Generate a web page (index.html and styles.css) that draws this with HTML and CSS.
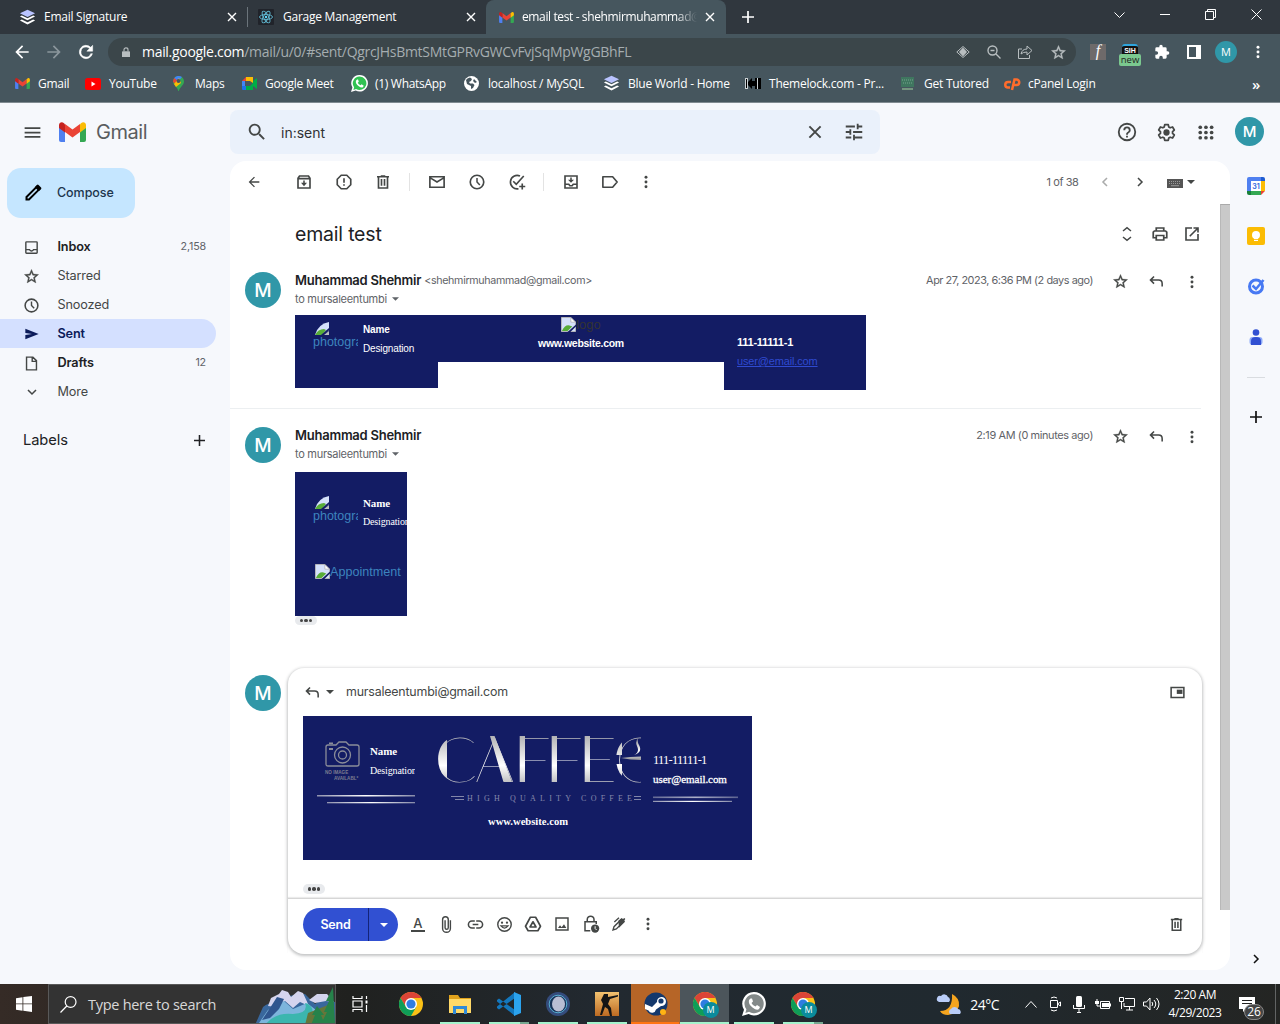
FILE: index.html
```html
<!DOCTYPE html>
<html lang="en">
<head>
<meta charset="utf-8">
<title>email test - Gmail</title>
<link rel="stylesheet" href="styles.css">
</head>
<body>
<svg class="defs" width="0" height="0" aria-hidden="true">
  <defs>
    <linearGradient id="silver" x1="0" y1="0" x2="0" y2="1"><stop offset="0" stop-color="#8c8c90"/><stop offset=".6" stop-color="#fff"/><stop offset="1" stop-color="#929296"/></linearGradient>
    <linearGradient id="rule" x1="0" x2="1"><stop offset="0" stop-color="#8f92ae"/><stop offset=".5" stop-color="#fff"/><stop offset="1" stop-color="#8488a8"/></linearGradient>
    <linearGradient id="gold" x1="0" y1="0" x2="0" y2="1"><stop offset="0" stop-color="#f2c270"/><stop offset="1" stop-color="#bd6a22"/></linearGradient>
    <symbol id="layers" viewBox="0 0 18 18"><path fill="#b9c3ff" d="M9 .8 17 4.6 9 8.4 1 4.6z"/><path fill="#fff" d="m1 8 2-1 6 2.8L15 7l2 1-8 4zM1 12.2l2-1 6 2.8 6-2.8 2 1-8 4.3z"/></symbol>
    <symbol id="gm" viewBox="0 0 27 20"><path fill="#4f80f0" d="M0 5v13a2 2 0 0 0 2 2h4V9z"/><path fill="#34a853" d="M21 9v11h4a2 2 0 0 0 2-2V5z"/><path fill="#ea4335" d="M6 2v8l7.500 5.500L21 10V2l-7.500 5.600z"/><path fill="#c5221f" d="M0 3v3l6 4.400V2.200L5 1.200C3-.8 0 .4 0 3z"/><path fill="#fbbc04" d="M27 3v3l-6 4.400V2.200l1-1C24-.8 27 .4 27 3z"/></symbol>
    <symbol id="x" viewBox="0 0 10 10"><path fill="none" stroke="currentColor" stroke-width="1.400" d="m1 1 8 8M9 1 1 9"/></symbol>
    <symbol id="plus" viewBox="0 0 12 12"><path fill="none" stroke="currentColor" stroke-width="1.700" d="M6 0v12M0 6h12"/></symbol>
    <symbol id="back" viewBox="0 0 24 24"><path fill="currentColor" d="M20 11H7.800l5.600-5.600L12 4l-8 8 8 8 1.400-1.400L7.800 13H20z"/></symbol>
    <symbol id="reload" viewBox="0 0 24 24"><path fill="currentColor" d="M17.650 6.350A8 8 0 1 0 19.730 14h-2.080A6 6 0 1 1 12 6c1.660 0 3.140.69 4.220 1.780L13 11h7V4z" stroke="currentColor" stroke-width=".6"/></symbol>
    <symbol id="lock" viewBox="0 0 10 13"><path fill="currentColor" d="M1 5h8a1 1 0 0 1 1 1v6H0V6a1 1 0 0 1 1-1z"/><path fill="none" stroke="currentColor" stroke-width="1.400" d="M2.500 5V3a2.500 2.300 0 0 1 5 0v2"/></symbol>
    <symbol id="star" viewBox="0 0 24 24"><path fill="currentColor" stroke="currentColor" stroke-width=".5" d="m22 9.240-7.190-.62L12 2 9.190 8.630 2 9.240l5.460 4.730L5.820 21 12 17.270 18.180 21l-1.630-7.030zM12 15.400l-3.760 2.270 1-4.280-3.320-2.880 4.380-.38L12 6.100l1.710 4.040 4.380.38-3.320 2.880 1 4.280z"/></symbol>
    <symbol id="dots" viewBox="0 0 24 24"><g fill="currentColor"><circle cx="12" cy="5" r="2.200"/><circle cx="12" cy="12" r="2.200"/><circle cx="12" cy="19" r="2.200"/></g></symbol>
    <symbol id="search" viewBox="0 0 24 24"><path fill="currentColor" d="M15.500 14h-.79l-.28-.27A6.500 6.500 0 1 0 13.730 14.430l.27.28v.79l5 4.990L20.490 19zm-6 0a4.500 4.500 0 1 1 0-9 4.500 4.500 0 0 1 0 9z"/></symbol>
    <symbol id="menu" viewBox="0 0 24 24"><path fill="currentColor" d="M3 18h18v-2H3zm0-5h18v-2H3zm0-7v2h18V6z"/></symbol>
    <symbol id="tune" viewBox="0 0 24 24"><path fill="currentColor" d="M3 17v2h6v-2zM3 5v2h10V5zm10 16v-2h8v-2h-8v-2h-2v6zM7 9v2H3v2h4v2h2V9zm14 4v-2H11v2zm-6-4h2V7h4V5h-4V3h-2z"/></symbol>
    <symbol id="help" viewBox="0 0 24 24"><path fill="currentColor" d="M11 18h2v-2h-2zm1-16a10 10 0 1 0 0 20 10 10 0 0 0 0-20zm0 18a8 8 0 1 1 0-16 8 8 0 0 1 0 16zm0-14a4 4 0 0 0-4 4h2a2 2 0 1 1 4 0c0 2-3 1.750-3 5h2c0-2.250 3-2.500 3-5a4 4 0 0 0-4-4z"/></symbol>
    <symbol id="gear" viewBox="0 0 24 24"><path fill="none" stroke="currentColor" stroke-width="2" stroke-linejoin="round" d="M10 3h4l.6 2.700 1.600.9 2.700-.9 2 3.500-2 1.800v2l2 1.800-2 3.500-2.700-.9-1.600.9L14 21h-4l-.6-2.700-1.600-.9-2.700.9-2-3.500 2-1.800v-2l-2-1.800 2-3.500 2.700.9 1.600-.9z"/><circle cx="12" cy="12" r="3.600" fill="currentColor"/></symbol>
    <symbol id="apps" viewBox="0 0 24 24"><g fill="currentColor"><circle cx="6" cy="6" r="2.100"/><circle cx="12.500" cy="6" r="2.100"/><circle cx="19" cy="6" r="2.100"/><circle cx="6" cy="12" r="2.100"/><circle cx="12.500" cy="12" r="2.100"/><circle cx="19" cy="12" r="2.100"/><circle cx="6" cy="18" r="2.100"/><circle cx="12.500" cy="18" r="2.100"/><circle cx="19" cy="18" r="2.100"/></g></symbol>
    <symbol id="pencil" viewBox="0 0 24 24"><path fill="none" stroke="currentColor" stroke-width="2.400" d="M4.200 16.800 17 4l3 3L7.200 19.800h-3z"/><path fill="currentColor" d="m14 5 2.700-2.700a1.500 1.500 0 0 1 2 0l3 3a1.500 1.500 0 0 1 0 2L19 10z"/></symbol>
    <symbol id="inbox" viewBox="0 0 24 24"><path fill="currentColor" d="M19 3H5a2 2 0 0 0-2 2v14a2 2 0 0 0 2 2h14a2 2 0 0 0 2-2V5a2 2 0 0 0-2-2zm0 16H5v-3h3.560a4 4 0 0 0 6.880 0H19zm0-5h-4.990a2 2 0 0 1-4 0H5V5h14z"/></symbol>
    <symbol id="clock" viewBox="0 0 24 24"><circle cx="12" cy="12" r="9" fill="none" stroke="currentColor" stroke-width="2.200"/><path fill="none" stroke="currentColor" stroke-width="2" d="M12 6.500V12l3.800 4"/></symbol>
    <symbol id="send" viewBox="0 0 24 24"><path fill="currentColor" d="M2 4v6.500l10 1.500-10 1.500V20l20-8z"/></symbol>
    <symbol id="draft" viewBox="0 0 24 24"><path fill="none" stroke="currentColor" stroke-width="2" d="M14 3H5v18h14V8zm-1 0v6h6"/></symbol>
    <symbol id="down" viewBox="0 0 24 24"><path fill="none" stroke="currentColor" stroke-width="2.300" d="m6 9 6 6 6-6"/></symbol>
    <symbol id="archive" viewBox="0 0 24 24"><path fill="none" stroke="currentColor" stroke-width="2.200" d="M4 7l2-3h12l2 3v13H4zM4 7.500h16"/><path fill="currentColor" d="M11 10h2v3h3l-4 4.500L8 13h3z"/></symbol>
    <symbol id="spam" viewBox="0 0 24 24"><path fill="none" stroke="currentColor" stroke-width="2.200" d="M8.300 3h7.400L21 8.300v7.400L15.700 21H8.300L3 15.700V8.300zM12 7v6m0 2v2"/></symbol>
    <symbol id="trash" viewBox="0 0 24 24"><path fill="none" stroke="currentColor" stroke-width="2.200" d="M4 5h16M9 4h6M6 5v15h12V5M10 8v9m4-9v9"/></symbol>
    <symbol id="mail" viewBox="0 0 24 24"><path fill="none" stroke="currentColor" stroke-width="2.200" d="M2.500 5h19v14h-19zM3 6.500l9 5.500 9-5.500"/></symbol>
    <symbol id="task" viewBox="0 0 24 24"><path fill="none" stroke="currentColor" stroke-width="2.200" d="M16 4a9 9 0 1 0-2 17M7 11l4 4L21 4m-2 10v8m-4-4h8"/></symbol>
    <symbol id="move" viewBox="0 0 24 24"><path fill="none" stroke="currentColor" stroke-width="2.200" d="M4 4h16v16H4zM4 15h5l1.500 2h3L15 15h5"/><path fill="currentColor" d="M11 6h2v3h3l-4 4-4-4h3z"/></symbol>
    <symbol id="label" viewBox="0 0 24 24"><path fill="none" stroke="currentColor" stroke-width="2.200" stroke-linejoin="round" d="M2.500 5h13l6 7-6 7h-13z"/></symbol>
    <symbol id="kbd" viewBox="0 0 16 9"><path fill="#555" d="M0 0h16v9H0z"/><path stroke="#999" stroke-dasharray="1 1" d="M2 2.500h12M2 4.500h12"/><path stroke="#999" d="M4 6.700h8"/></symbol>
    <symbol id="caret" viewBox="0 0 8 4"><path fill="currentColor" d="M0 0h8L4 4z"/></symbol>
    <symbol id="unfold" viewBox="0 0 24 24"><path fill="none" stroke="currentColor" stroke-width="2.200" d="m6 7.500 6-5 6 5m-12 9 6 5 6-5"/></symbol>
    <symbol id="print" viewBox="0 0 24 24"><path fill="none" stroke="currentColor" stroke-width="2.300" d="M7 8V4h10v4M7 17H3V9.500L4.500 8h15L21 9.500V17h-4M7 14h10v6H7z"/></symbol>
    <symbol id="open" viewBox="0 0 24 24"><path fill="none" stroke="currentColor" stroke-width="2.200" d="M12 4H4v16h16v-8M14 4h6v6M20 4 9 15"/></symbol>
    <symbol id="reply" viewBox="0 0 24 24"><path fill="none" stroke="currentColor" stroke-width="2.200" d="M8.500 5 3.500 10l5 5M4 10h11q5 0 5 5v4"/></symbol>
    <symbol id="clip" viewBox="0 0 24 24"><path fill="none" stroke="currentColor" stroke-width="2" d="M17.500 6v11.500a5.500 5.500 0 0 1-11 0V5a4 4 0 0 1 8 0v11.500a2.200 2.200 0 0 1-4.500 0V6"/></symbol>
    <symbol id="link" viewBox="0 0 24 24"><path fill="none" stroke="currentColor" stroke-width="2.200" d="M11 7H7a5 5 0 0 0 0 10h4m2-10h4a5 5 0 0 1 0 10h-4M8 12h8"/></symbol>
    <symbol id="smile" viewBox="0 0 24 24"><circle cx="12" cy="12" r="9.500" fill="none" stroke="currentColor" stroke-width="2"/><circle cx="8.500" cy="9.500" r="1.600" fill="currentColor"/><circle cx="15.500" cy="9.500" r="1.600" fill="currentColor"/><path fill="none" stroke="currentColor" stroke-width="1.800" d="M7 14q5 6 10 0z"/></symbol>
    <symbol id="drive" viewBox="0 0 24 24"><path fill="none" stroke="currentColor" stroke-width="2.200" stroke-linejoin="round" d="M8.500 3h7L22 15l-3.500 6h-13L2 15zM12 9l4 7H8z"/></symbol>
    <symbol id="image" viewBox="0 0 24 24"><path fill="none" stroke="currentColor" stroke-width="2.200" d="M3 3h18v18H3z"/><path fill="currentColor" d="m6 18 3-4 2.500 3 3.500-4.500 3.500 5.500z"/></symbol>
    <symbol id="lockclock" viewBox="0 0 24 24"><path fill="none" stroke="currentColor" stroke-width="2" d="M11 21H4V9h15v3M7 9V6a4.500 4.500 0 0 1 9 0v3"/><circle cx="17.500" cy="18" r="5.500" fill="currentColor"/><path fill="none" stroke="#fff" stroke-width="1.300" d="M17.500 15v3l2 2"/></symbol>
    <symbol id="pen" viewBox="0 0 24 24"><path fill="none" stroke="currentColor" stroke-width="2" d="m3 21 1.500-5L15 5.500 18.500 9 8 19.500zM5 9l7-6.500"/><path fill="currentColor" d="m11 7 5-4 2 1.500L20 3l1.500 1.500L20 6.500l1 2-9 9z"/></symbol>
    <symbol id="pop" viewBox="0 0 24 24"><path fill="none" stroke="currentColor" stroke-width="2.200" d="M3 5h18v14H3z"/><path fill="currentColor" d="M11 8h8v6h-8z"/></symbol>
    <symbol id="broken" viewBox="0 0 16 16"><path fill="#d5e1fa" stroke="#bbb" d="M.5.500h10l5 5v10H.500z"/><path fill="#58ad38" d="M1 15q3-7 8-6l3 1-5 5z"/><path fill="#131c64" d="m7 16 9-8v2l-6 6z"/><path fill="#fff" stroke="#aaa" stroke-width=".7" d="M10.500.5v5h5z"/></symbol>
    <symbol id="leaf" viewBox="0 0 14 14"><path fill="#d5e1fa" d="M0 14Q3 3 14 1v8L8 14z"/><path fill="#58ad38" d="M0 14q3-6 9-6l2 1-4 5z"/><path fill="#131c64" d="m6 14 8-7v2l-5 5z"/><path fill="#b9bcc0" d="M14 10v4H9z"/></symbol>
    <symbol id="chrome" viewBox="0 0 24 24"><circle cx="12" cy="12" r="12" fill="#fbc116"/><path fill="#db4437" d="M1.600 6A12 12 0 0 1 22.400 6H12L7 15z"/><path fill="#0f9d58" d="M1.600 6A12 12 0 0 0 12 24l5.200-9L7 15z"/><circle cx="12" cy="12" r="6" fill="#fff"/><circle cx="12" cy="12" r="4.600" fill="#2f7de1"/></symbol>
    <symbol id="wa" viewBox="0 0 24 24"><path fill="#fff" d="M12.300 0a11.700 11.700 0 1 1-5.700 22L0 24l2-6.300A11.700 11.700 0 0 1 12.300 0z"/><path fill="currentColor" d="M12.300 2.200a9.500 9.500 0 1 1-5.200 17.500L3.400 21l1-3.700A9.500 9.500 0 0 1 12.300 2.200z"/><path fill="#fff" d="M8.500 6.500 7 8q-1 4 3.500 7.500T17 17l1-2-3-2-1.500 1.500Q10.500 13.500 9.500 11L11 9.500l-1-3z"/></symbol>
  </defs>
</svg>

<div class="tabs">
  <div class="tab t1"><svg width="17" height="17"><use href="#layers"/></svg><span>Email Signature</span><svg class="close" width="10" height="10"><use href="#x"/></svg></div>
  <div class="tab t2"><svg width="16" height="16" viewBox="0 0 16 16"><rect width="16" height="16" rx="1" fill="#20232a"/><g fill="none" stroke="#61b9d2" stroke-width=".9"><ellipse cx="8" cy="8" rx="6.500" ry="2.500"/><ellipse cx="8" cy="8" rx="6.500" ry="2.500" transform="rotate(60 8 8)"/><ellipse cx="8" cy="8" rx="6.500" ry="2.500" transform="rotate(120 8 8)"/></g><circle cx="8" cy="8" r="1.200" fill="#61dafb"/></svg><span>Garage Management</span><svg class="close" width="10" height="10"><use href="#x"/></svg></div>
  <div class="tab t3"><svg width="15" height="11"><use href="#gm"/></svg><span class="fade">email test - shehmirmuhammad@</span><svg class="close" width="10" height="10"><use href="#x"/></svg></div>
  <svg class="newtab" width="12" height="12"><use href="#plus"/></svg>
  <div class="winctl"><svg width="11" height="6" viewBox="0 0 11 6"><path d="m.5.5 5 5 5-5"/></svg><svg width="10" height="1" viewBox="0 0 10 1"><path d="M0 .5h10"/></svg><svg width="11" height="11" viewBox="0 0 11 11"><path d="M.5 2.500h8v8h-8zM2.500 2.500v-2h8v8h-2"/></svg><svg width="11" height="11" viewBox="0 0 11 11"><path d="m.5.500 10 10m0-10-10 10"/></svg></div>
</div>

<div class="omni">
  <svg width="20" height="20"><use href="#back"/></svg>
  <svg class="fwd" width="20" height="20"><use href="#back"/></svg>
  <svg width="20" height="20"><use href="#reload"/></svg>
  <div class="url">
    <svg width="8" height="11"><use href="#lock"/></svg>
    <span class="addr"><b>mail.google.com</b>/mail/u/0/#sent/QgrcJHsBmtSMtGPRvGWCvFvjSqMpWgGBhFL</span>
    <div class="urlicons">
      <svg width="14" height="14" viewBox="0 0 14 14"><path fill="none" stroke="currentColor" d="M.8 7 7 1.500 13.200 7 7 12.500z"/><path fill="currentColor" d="M3 7 7 2.500 11 7l-4 4.500z"/></svg>
      <svg width="14" height="14" viewBox="0 0 14 14"><path fill="none" stroke="currentColor" stroke-width="1.400" d="M10 5.500a4.500 4.500 0 1 1-9 0 4.500 4.500 0 0 1 9 0zM9 9l4.500 4.500M3.500 5.500h4"/></svg>
      <svg width="15" height="14" viewBox="0 0 15 14"><path fill="none" stroke="currentColor" d="M4 4H.5v9.500h11V10M3 9q1-5 6-5V1l5 4.500L9 10V7Q5 7 3 9z"/></svg>
      <svg width="17" height="17"><use href="#star"/></svg>
    </div>
  </div>
  <div class="ext">
    <span class="fx">f</span>
    <div class="sih"><i>SIH</i><span>new</span></div>
    <svg width="16" height="16" viewBox="0 0 24 24"><path fill="#fff" d="M20.500 11H19V7a2 2 0 0 0-2-2h-4V3.500a2.500 2.500 0 0 0-5 0V5H4a2 2 0 0 0-2 2v3.800h1.500a2.700 2.700 0 0 1 0 5.400H2V20a2 2 0 0 0 2 2h3.800v-1.500a2.700 2.700 0 0 1 5.400 0V22H17a2 2 0 0 0 2-2v-4h1.500a2.500 2.500 0 0 0 0-5z"/></svg>
    <svg width="14" height="14" viewBox="0 0 14 14"><path fill="#fff" fill-rule="evenodd" d="M0 0h14v14H0zm2 2v10h7V2z"/></svg>
    <span class="me">M</span>
    <svg width="16" height="16"><use href="#dots"/></svg>
  </div>
</div>

<div class="marks">
  <div class="bm b1"><svg width="15" height="11"><use href="#gm"/></svg><span>Gmail</span></div>
  <div class="bm b2"><svg width="16" height="12" viewBox="0 0 16 12"><rect width="16" height="12" rx="2.500" fill="#f00"/><path fill="#fff" d="m6.500 3.500 4 2.500-4 2.500z"/></svg><span>YouTube</span></div>
  <div class="bm b3"><svg width="11" height="15" viewBox="0 0 11 15"><path fill="#34a853" d="M0 5.500a5.500 5.500 0 0 1 11 0C11 9 7 11 5.800 15h-.6C4.500 11 0 9 0 5.500z"/><path fill="#4285f4" d="M1 2.500A5.500 5.500 0 0 1 9 1L5 6z"/><path fill="#ea4335" d="M1.200 2 5 5 3 8 0 6q0-2 1.200-4z"/><path fill="#fbbc04" d="m1 8 5-6 2 5-5 4z"/><circle cx="5.500" cy="5" r="2" fill="#46555d"/></svg><span>Maps</span></div>
  <div class="bm b4"><svg width="15" height="13" viewBox="0 0 15 13"><path fill="#4285f4" d="M0 4h3v6H0z"/><path fill="#ea4335" d="M0 4 4 0v4z"/><path fill="#fbbc04" d="M4 0h7v6L8 4H4z"/><path fill="#1e73e8" d="M0 9h4v4H1q-1 0-1-1z"/><path fill="#00ac47" d="M4 9h4l3-3v7H4zM11 4l4-3v11l-4-3z"/></svg><span>Google Meet</span></div>
  <div class="bm b5"><svg width="17" height="17" class="wagreen"><use href="#wa"/></svg><span>(1) WhatsApp</span></div>
  <div class="bm b6"><svg width="15" height="15" viewBox="0 0 15 15"><circle cx="7.500" cy="7.500" r="7.500" fill="#fff"/><path fill="#46555d" d="M2 4q1-2 4-2.500L8 3 7 5 5 6l1 1.500h3L10.500 9 9 12l-2 1V10L3 8zM10 3l3 3-2 1-2-2z"/></svg><span>localhost / MySQL</span></div>
  <div class="bm b7"><svg width="17" height="17"><use href="#layers"/></svg><span>Blue World - Home</span></div>
  <div class="bm b8"><svg width="16" height="11" viewBox="0 0 16 11"><path fill="#c9cfd2" d="M0 0h3v11H0zM12 0h1v11h-1z"/><path d="M1 1h1v9H1zM3 4l4-4v3h3V0h2v11h-2V8H7v3L3 7zM13 0h3v11h-3z"/></svg><span>Themelock.com - Pr...</span></div>
  <div class="bm b9"><svg width="13" height="13" viewBox="0 0 13 13"><path fill="#3f765f" d="M0 0h13v10H0z"/><path stroke="#77a58e" stroke-dasharray="1 1" d="M1 3h11M2 6h10"/><path fill="#75957f" d="M1 11h11v2H1z"/></svg><span>Get Tutored</span></div>
  <div class="bm b10"><svg width="16" height="12" viewBox="0 0 16 12"><path fill="none" stroke="#ff6c2c" stroke-width="2.500" d="M7 4H4a2.500 2.500 0 0 0 0 5.500h2M8 12l2.500-10.500h2a2.200 2.200 0 0 1 0 5.500H10"/></svg><span>cPanel Login</span></div>
  <span class="more">»</span>
</div>

<div class="gmail">
  <aside class="side">
    <div class="brand"><svg width="21" height="21"><use href="#menu"/></svg><svg class="logo" width="27" height="20"><use href="#gm"/></svg><span>Gmail</span></div>
    <div class="compose"><svg width="20" height="20"><use href="#pencil"/></svg><span>Compose</span></div>
    <nav>
      <div class="nav strong"><svg width="17" height="17"><use href="#inbox"/></svg><span>Inbox</span><em>2,158</em></div>
      <div class="nav"><svg width="17" height="17"><use href="#star"/></svg><span>Starred</span></div>
      <div class="nav"><svg width="17" height="17"><use href="#clock"/></svg><span>Snoozed</span></div>
      <div class="nav strong on"><svg width="16" height="16"><use href="#send"/></svg><span>Sent</span></div>
      <div class="nav strong"><svg width="17" height="17"><use href="#draft"/></svg><span>Drafts</span><em>12</em></div>
      <div class="nav"><svg width="16" height="16"><use href="#down"/></svg><span>More</span></div>
    </nav>
    <div class="labels"><span>Labels</span><svg width="11" height="11"><use href="#plus"/></svg></div>
  </aside>

  <section class="center">
    <div class="head">
      <div class="searchbox"><svg width="22" height="22"><use href="#search"/></svg><span>in:sent</span><svg class="clear" width="14" height="14"><use href="#x"/></svg><svg width="22" height="22"><use href="#tune"/></svg></div>
      <div class="account"><svg width="22" height="22"><use href="#help"/></svg><svg width="21" height="21"><use href="#gear"/></svg><svg width="21" height="21"><use href="#apps"/></svg><span class="avatar small">M</span></div>
    </div>
    <main class="pane">
      <div class="tools">
        <svg width="16" height="16"><use href="#back"/></svg>
        <svg width="18" height="18"><use href="#archive"/></svg>
        <svg width="18" height="18"><use href="#spam"/></svg>
        <svg width="18" height="18"><use href="#trash"/></svg>
        <i></i>
        <svg width="18" height="18"><use href="#mail"/></svg>
        <svg width="18" height="18"><use href="#clock"/></svg>
        <svg class="addtask" width="18" height="18"><use href="#task"/></svg>
        <i></i>
        <svg width="18" height="18"><use href="#move"/></svg>
        <svg width="18" height="18"><use href="#label"/></svg>
        <svg width="16" height="16"><use href="#dots"/></svg>
        <b></b>
        <span>1 of 38</span>
        <svg class="prev" width="16" height="16"><use href="#down"/></svg>
        <svg class="next" width="16" height="16"><use href="#down"/></svg>
        <svg class="kbd" width="16" height="9"><use href="#kbd"/></svg>
        <svg width="8" height="4"><use href="#caret"/></svg>
      </div>
      <div class="scroll">
        <div class="thread">
          <div class="subject"><h1>email test</h1><div class="acts"><svg width="16" height="16"><use href="#unfold"/></svg><svg width="18" height="18"><use href="#print"/></svg><svg width="18" height="18"><use href="#open"/></svg></div></div>

          <article class="msg first">
            <span class="avatar">M</span>
            <div class="body">
              <div class="who"><b>Muhammad Shehmir</b><small>&lt;shehmirmuhammad@gmail.com&gt;</small><time>Apr 27, 2023, 6:36 PM (2 days ago)</time><div class="acts"><svg width="17" height="17"><use href="#star"/></svg><svg width="17" height="17"><use href="#reply"/></svg><svg width="16" height="16"><use href="#dots"/></svg></div></div>
              <div class="to"><span>to mursaleentumbi</span><svg width="7" height="4"><use href="#caret"/></svg></div>
              <div class="sig wide">
                <div class="s1"><div class="photo"><svg width="14" height="14"><use href="#leaf"/></svg><span>photography</span></div><div class="person"><b>Name</b><span>Designation</span></div></div>
                <div class="s2"><div><svg width="15" height="15"><use href="#broken"/></svg><span>logo</span></div><b>www.website.com</b></div>
                <div class="s3"><b>111-11111-1</b><u>user@email.com</u></div>
              </div>
            </div>
          </article>

          <article class="msg">
            <span class="avatar">M</span>
            <div class="body">
              <div class="who"><b>Muhammad Shehmir</b><time class="recent">2:19 AM (0 minutes ago)</time><div class="acts"><svg width="17" height="17"><use href="#star"/></svg><svg width="17" height="17"><use href="#reply"/></svg><svg width="16" height="16"><use href="#dots"/></svg></div></div>
              <div class="to"><span>to mursaleentumbi</span><svg width="7" height="4"><use href="#caret"/></svg></div>
              <div class="sig narrow">
                <div class="s1"><div class="photo"><svg width="14" height="14"><use href="#leaf"/></svg><span>photography</span></div><div class="person serif"><b>Name</b><span>Designation</span></div></div>
                <div class="appt"><svg width="15" height="15"><use href="#broken"/></svg><span>Appointment</span></div>
              </div>
              <div class="pill"><i></i><i></i><i></i></div>
            </div>
          </article>

          <div class="replyrow">
            <span class="avatar">M</span>
            <div class="card">
              <div class="rto"><svg width="17" height="17"><use href="#reply"/></svg><svg width="8" height="4"><use href="#caret"/></svg><span>mursaleentumbi@gmail.com</span><svg class="pop" width="17" height="17"><use href="#pop"/></svg></div>
              <div class="sig full">
                <div class="f1">
                  <div class="id">
                    <svg width="36" height="40" viewBox="0 0 36 40"><g fill="none" stroke="#8b8d99" stroke-width="1.300"><path d="M3 4h8l3-3h7l3 3h8q2 0 2 2v17q0 2-2 2H3q-2 0-2-2V6q0-2 2-2z"/><circle cx="17.500" cy="14" r="8"/><circle cx="17.500" cy="14" r="4"/></g><path fill="#8b8d99" d="M4 7h4v2H4zM4 1.500h4V3H4z"/><text x="0" y="33" class="noimg">NO IMAGE</text><text x="9" y="39" class="noimg">AVAILABL*</text></svg>
                    <div class="person serif"><b>Name</b><span>Designation</span></div>
                  </div>
                  <svg width="98" height="10" viewBox="0 0 98 10"><rect width="98" height="1.500" y="1" fill="url(#rule)"/><rect width="88" height="1.300" x="10" y="8" fill="url(#rule)"/></svg>
                </div>
                <div class="f2">
                  <svg width="203" height="68" viewBox="0 0 203 68">
                    <defs>
                      <clipPath id="stems"><path d="M0 0h9v48H0zM52 0h8l17 48H66zM80 0h7v48h-7zM112 0h7v48h-7zM145 0h7v48h-7zM176 0h8v19h-8zM176 28h8v20h-8z"/></clipPath>
                    </defs>
                    <g fill="url(#silver)"><text class="deco thin" y="46" x="-3 37 78 110 143">CAFFE</text><text class="deco thin" y="46" x="177">C</text></g>
                    <g fill="url(#silver)" clip-path="url(#stems)"><text class="deco heavy" y="46" x="-2 30 77 109 142">CAFFE</text><text class="deco heavy" y="46" x="176">C</text></g>
                    <path fill="#131c64" d="M188 10h15v30h-15z"/><path fill="url(#silver)" d="M183 22q9-1.500 20-1.500v3.500q-11 0-20-2zM196 19q6-3 3-9-2-4 1-8-1 4 1 7 4 7-5 10z"/>
                    <path stroke="#8286a9" d="M13 60.500h13M17 63.500h9M196 60.500h7M196 63.500h7"/>
                    <text class="tag" x="29" y="65" textLength="165">HIGH QUALITY COFFEE</text>
                  </svg>
                  <b>www.website.com</b>
                </div>
                <div class="f3"><span>111-11111-1</span><b>user@email.com</b><svg width="85" height="7" viewBox="0 0 85 7"><rect width="85" height="1.600" y=".5" fill="url(#rule)" opacity=".65"/><rect width="79" height="1.200" y="4.800" fill="url(#rule)"/></svg></div>
              </div>
              <div class="pill"><i></i><i></i><i></i></div>
              <div class="foot">
                <div class="sendbtn"><span>Send</span><div><svg width="8" height="4"><use href="#caret"/></svg></div></div>
                <div class="fmt">
                  <span class="acolor">A</span>
                  <svg width="17" height="17"><use href="#clip"/></svg>
                  <svg width="17" height="17"><use href="#link"/></svg>
                  <svg width="17" height="17"><use href="#smile"/></svg>
                  <svg width="18" height="18"><use href="#drive"/></svg>
                  <svg width="16" height="16"><use href="#image"/></svg>
                  <svg width="18" height="18"><use href="#lockclock"/></svg>
                  <svg width="16" height="16"><use href="#pen"/></svg>
                  <svg width="16" height="16"><use href="#dots"/></svg>
                </div>
                <svg class="bin" width="17" height="17"><use href="#trash"/></svg>
              </div>
            </div>
          </div>
        </div>
        <div class="bar"></div>
      </div>
    </main>
  </section>

  <aside class="rail">
    <svg width="18" height="18" viewBox="0 0 18 18"><path fill="#4f80f0" d="M2 0h12v4H4v10H0V2q0-2 2-2z"/><path fill="#1e5bd0" d="M14 0h2q2 0 2 2v2h-4z"/><path fill="#fbbc04" d="M14 4h4v10h-4z"/><path fill="#34a853" d="M4 14h10v4H4z"/><path fill="#188038" d="M0 14h4v4H2q-2 0-2-2z"/><path fill="#ea4335" d="M14 14h4l-4 4z"/><path fill="#fff" d="M4 4h10v10H4z"/><text x="9" y="12" text-anchor="middle" class="cal">31</text></svg>
    <svg width="18" height="18" viewBox="0 0 18 18"><rect width="18" height="18" rx="2" fill="#fbbc04"/><circle cx="9" cy="8" r="4" fill="#fff"/><path fill="#fff" d="M7 10h4v4H7z"/><path stroke="#fbbc04" stroke-width=".8" d="M7 12.500h4"/></svg>
    <svg width="18" height="18" viewBox="0 0 18 18"><circle cx="9" cy="9.500" r="6.500" fill="none" stroke="#4779f3" stroke-width="3"/><path fill="none" stroke="#4779f3" stroke-width="2.500" d="m5.500 8.500 3.500 3.500 7.500-9"/></svg>
    <svg width="14" height="18" viewBox="0 -2 14 18"><circle cx="7" cy="3.500" r="3.300" fill="#3150d2"/><rect x="0.500" y="8" width="13" height="8" rx="3" fill="#8eabf8"/><path fill="#3150d2" d="M2 12q0-4 5-4t5 4v4H2z"/></svg>
    <hr>
    <svg class="add" width="12" height="12"><use href="#plus"/></svg>
    <svg class="next" width="16" height="16"><use href="#down"/></svg>
  </aside>
</div>

<footer class="taskbar">
  <div class="start"><svg width="16" height="16" viewBox="0 0 16 16"><path fill="#fff" d="m0 2.200 6.500-1v6.300H0zM7.300 1.100 16 0v7.500H7.300zM0 8.300h6.500v6.400L0 13.800zM7.300 8.300H16V16l-8.700-1.200z"/></svg></div>
  <div class="wsearch"><svg width="17" height="17" viewBox="0 0 17 17"><path fill="none" stroke="#fff" stroke-width="1.200" d="M16 6a5.400 5.400 0 1 1-10.800 0A5.400 5.400 0 0 1 16 6zM6.800 10 .5 16.500"/></svg><span>Type here to search</span>
    <svg class="scene" width="80" height="38" viewBox="0 0 80 38"><path fill="#39679c" d="M0 38 8 20q2-2 7-4L28 10l12-2 10-1 10 10 6-4 14 2v23z"/><path fill="#d4d4ee" d="m13 19 3-8 8-4 3-4 6 2 3 5 7-6 5 2 6 13-9-4-7 6-8-7-9 6zM54 13l8-6 10 0 7 8-8-1-11 2z"/><path fill="#7db5dc" d="m4 36 9-13 16-9 9 8 14-6 18 14-30 10z"/><path fill="#2f558e" d="m22 10 7 2-5 10-9 9-8 2 8-12z"/><path fill="#3bb6ae" d="M10 38q10-13 28-11 16-1 12-11 14 4 2 22z"/><path fill="#66763a" d="m50 38 3-12 20-8 7 20z"/><path fill="#26824a" d="m62 19-5 9h3l-4 10h14l-4-10h3zM78 0l-7 14h3l-5 11h3l-6 12h14z"/></svg></div>
  <div class="app view"><svg width="17" height="16" viewBox="0 0 17 16"><path fill="none" stroke="#fff" stroke-width="1.200" d="M1 0v2.500h9V0M1 5h9v6H1zM1 16v-2.500h9V16M14.500 0v3m0 6v7"/><path fill="#fff" d="M13.500 4.500h2v3h-2z"/></svg></div>
  <div class="app"><svg width="24" height="24"><use href="#chrome"/></svg></div>
  <div class="app run"><svg width="22" height="19" viewBox="0 0 22 19"><path fill="#e0a21c" d="M0 0h9l2 3h11v15H0z"/><path fill="#ffd968" d="M0 4h22v14H0z"/><path fill="#2f8ad8" d="M4 11h14v8h-3v-5H7v5H4z"/></svg></div>
  <div class="app run two"><svg width="24" height="24" viewBox="0 0 24 24"><path fill="#1377bd" d="M0 8 2 6.500 18 18v6L0 9.500zM0 16l2 1.500L18 6V0L0 14.500z"/><path fill="#2ba3ee" d="m17 0 7 3v18l-7 3z"/></svg></div>
  <div class="app run"><svg width="24" height="24" viewBox="0 0 24 24"><circle cx="12" cy="12" r="12" fill="#344c7c"/><circle cx="12" cy="12" r="8.800" fill="#183257" stroke="#58aed0"/><ellipse cx="12.500" cy="12" rx="6.500" ry="7.500" fill="#b9bdd3"/></svg></div>
  <div class="app run"><svg width="24" height="24" viewBox="0 0 24 24"><rect width="24" height="24" fill="url(#gold)"/><path fill="#151515" d="M9 2h4v3l10-2v1.500L15 7l-2 5 3 4 1 8h-2l-2-7-3-2-3 8H5l3-11-2-4z"/></svg></div>
  <div class="app run steam"><svg width="24" height="24" viewBox="0 0 24 24"><circle cx="12" cy="12" r="11.500" fill="#14386c"/><path fill="#fff" d="m1 12 7 3 5-5a4.500 4.500 0 1 1 4 4l-5 3.500a4 4 0 0 1-7.500 1L1 17z"/><circle cx="17" cy="9" r="2.600" fill="#14386c"/><circle cx="19" cy="20" r="3" fill="#ffb313"/></svg></div>
  <div class="app run active"><div class="prof"><svg width="24" height="24"><use href="#chrome"/></svg><span>M</span></div></div>
  <div class="app run"><svg class="wagrey" width="24" height="24"><use href="#wa"/></svg></div>
  <div class="app run two"><div class="prof"><svg width="24" height="24"><use href="#chrome"/></svg><span>M</span></div></div>
  <div class="tray">
    <svg width="26" height="23" viewBox="0 0 26 23"><path fill="#f5a51f" d="M15 1q8 4 7 12-2 8-11 9-6 0-8-4 13 0 12-17z"/><path fill="#b9cdf8" d="M2 9a3 3 0 0 1 2-6 4 4 0 0 1 7 1 3 3 0 0 1 1 5zM13 21a3 3 0 0 1 1-5 4 4 0 0 1 7 0 3 3 0 0 1 2 5z"/></svg>
    <span class="temp">24°C</span>
    <div class="cells">
      <svg width="12" height="7" viewBox="0 0 12 7"><path d="m.5 6.500 5.500-6 5.500 6"/></svg>
      <svg width="12" height="16" viewBox="0 0 12 16"><path d="M1.500 4.500h7v7h-7zM8.500 8l3-2v4zM2 2q3-2 6 0M2 14q3 2 6 0"/></svg>
      <svg width="12" height="17" viewBox="0 0 12 17"><rect x="3" width="6" height="11" rx="1.500" fill="#fff"/><path d="M.5 9v3.500h11V9M6 13v3.500M4 16.500h4"/></svg>
      <svg width="16" height="12" viewBox="0 0 16 12"><path d="M5.500 3.500h9v7h-9zM0 4h4M2 1v2M2 4v4h3"/><path fill="#fff" d="M7 5h7v4H7zM0 3h4v3H0zM14 5.500h2v3h-2z"/></svg>
      <svg width="16" height="14" viewBox="0 0 16 14"><path d="M6 1.500h9.500v8H5V6M.500.500h4v4h-4zM2.500 5v7M10.500 10v3M7 13h7"/></svg>
      <svg width="17" height="14" viewBox="0 0 17 14"><path d="M.5 5h3l3.500-4v12L3.500 9h-3zM9 5q1.500 2 0 4M11 3q3.500 4 0 8M13.500 1q5 6 0 12"/></svg>
    </div>
    <div class="when"><span>2:20 AM</span><span>4/29/2023</span></div>
    <div class="notif"><svg width="17" height="15" viewBox="0 0 17 15"><path fill="#fff" d="M0 0h16v12H7l-3 3v-3H0z"/><path class="lines" d="M3 3.500h10M3 6.500h10"/></svg><span>26</span></div>
    <i class="peek"></i>
  </div>
</footer>
</body>
</html>
```
FILE: styles.css
```css
* { box-sizing: border-box; }
body { margin: 0; width: 1280px; height: 1024px; overflow: hidden; font-family: "Open Sans", "Noto Sans", sans-serif; font-size: 12px; color: #202124; }
svg { display: block; flex: none; overflow: visible; }
span, b, small, time, em { white-space: nowrap; }
.defs { position: absolute; }

/* Browser chrome */
.tabs { height: 34px; background: #30373e; display: flex; align-items: center; color: #fff; letter-spacing: -.25px; }
.tab { display: flex; align-items: center; height: 34px; }
.tab span { padding-bottom: 1px; }
.tab .close { margin-left: auto; }
.t1 { width: 247px; padding: 0 10px 0 19px; gap: 8px; }
.t2 { width: 239px; padding: 0 10px 0 11px; gap: 9px; background: linear-gradient(#6b747b, #6b747b) 0 7px / 1px 20px no-repeat; }
.t3 { width: 240px; padding: 0 11px 0 13px; gap: 8px; background: #46565e; border-radius: 8px 8px 0 0; }
.fade { width: 175px; overflow: hidden; letter-spacing: -.38px; -webkit-mask-image: linear-gradient(90deg, #000 88%, transparent); mask-image: linear-gradient(90deg, #000 88%, transparent); }
.newtab { margin-left: 16px; }
.winctl { margin-left: auto; display: flex; align-items: center; gap: 35px; padding: 0 18px 5px 0; }
.winctl path { fill: none; stroke: #fff; }
.omni { height: 36px; background: #46565e; display: flex; align-items: center; color: #fff; padding-left: 12px; gap: 12px; }
.fwd { transform: scaleX(-1); color: #8b969c; }
.url { width: 968px; height: 28px; border-radius: 14px; background: #3b464a; display: flex; align-items: center; padding: 0 9px 0 14px; color: #b8bec0; }
.addr { font-size: 14px; margin-left: 12px; padding-bottom: 1px; color: #a5adb0; letter-spacing: -.3px; }
.addr b { font-weight: 400; color: #fff; }
.urlicons { margin-left: auto; display: flex; align-items: center; gap: 17px; }
.ext { display: flex; align-items: center; margin-left: 2px; }
.fx { width: 16px; height: 16px; background: #6e6a6a; font: italic 16px/14px "Liberation Serif", serif; text-align: center; }
.sih { width: 22px; margin: 0 13px; color: #fff; display: flex; flex-direction: column; align-items: center; padding-top: 5px; }
.sih i { width: 16px; height: 10px; background: #111; border-top: 2px solid #2fa5dd; border-radius: 3px 3px 0 0; font: bold 7px/9px "Liberation Sans", sans-serif; text-align: center; }
.sih span { width: 22px; height: 12px; background: #7bc88f; color: #222; border-radius: 2px; font-size: 9.500px; line-height: 12px; text-align: center; }
.ext > svg:nth-of-type(1) { margin-right: 17px; }
.me { width: 22px; height: 22px; border-radius: 50%; background: #3097a8; text-align: center; line-height: 22px; margin: 0 13px 0 14px; font-size: 11px; }
.marks { height: 33px; background: #46565e; border-bottom: 1px solid #808b91; display: flex; align-items: center; color: #fff; padding: 0 0 5px 15px; letter-spacing: -.23px; }
.bm { display: flex; align-items: center; }
.bm span { margin-left: 8px; }
.b1 { width: 70px; } .b2 { width: 88px; } .b3 { width: 69px; } .b4 { width: 109px; } .b5 { width: 113px; } .b6 { width: 139px; } .b7 { width: 142px; } .b8 { width: 156px; } .b9 { width: 103px; } .b10 { width: 248px; }
.b3 span { margin-left: 11px; } .b9 span { margin-left: 10px; } .b6 span { margin-left: 9px; }
.b5 span { letter-spacing: -.3px; margin-left: 7px; }
.wagreen { color: #31c252; }
.more { font-size: 15px; font-weight: 600; }

/* Mail app */
.gmail { height: 881px; background: #f6f8fc; display: grid; grid-template-columns: 230px 1000px 50px; font-family: "Inter", sans-serif; color: #444746; }
.brand { display: flex; align-items: center; height: 58px; padding-left: 22px; }
.brand .logo { margin-left: 16px; }
.brand span { font-size: 20px; letter-spacing: -.45px; margin-left: 10px; color: #5a5d60; }
.compose { margin: 7px 0 14px 7px; width: 128px; height: 50px; border-radius: 14px; background: #c5e6ff; display: flex; align-items: center; padding-left: 16px; gap: 14px; color: #000; }
.compose span { color: #1d354d; font-weight: 500; font-size: 12.500px; letter-spacing: -.05px; padding-bottom: 2px; }
.nav { display: flex; align-items: center; height: 29px; width: 216px; padding: 0 10px 0 23px; font-size: 12.700px; letter-spacing: -.15px; border-radius: 0 15px 15px 0; }
.nav svg { margin-top: 1px; }
.nav span { margin-left: 17.500px; }
.nav em { margin-left: auto; font-style: normal; font-size: 10.700px; color: #5f6368; }
.strong span { font-weight: 600; color: #202124; }
.on { background: #d4e0ff; color: #0b1b5a; padding-left: 24px; }
.on span { color: #0b1b5a; }
.nav:last-child { padding-left: 24px; height: 28px; margin-bottom: 1px; }
.labels { display: flex; align-items: center; justify-content: space-between; padding: 25px 25px 0 23px; font-size: 14.700px; color: #202124; letter-spacing: -.1px; }
.head { height: 58px; display: flex; align-items: center; justify-content: space-between; }
.searchbox { width: 650px; height: 44px; margin-bottom: 1px; background: #eaf1fb; border-radius: 8px; display: flex; align-items: center; padding: 0 15px 0 16px; }
.searchbox span { margin: 1px 0 0 13px; font-size: 14px; color: #303134; }
.searchbox .clear { margin-left: auto; margin-right: 21px; }
.account { display: flex; align-items: center; gap: 18px; margin-right: -34px; }
.account .avatar { margin-left: 1px; }
.avatar { width: 36px; height: 36px; border-radius: 50%; background: #3097a8; color: #fff; font-weight: 500; font-size: 19px; text-align: center; line-height: 37px; flex: none; }
.avatar.small { width: 29px; height: 29px; line-height: 30px; font-size: 15px; margin-bottom: 1px; }
.pane { height: 809px; background: #fff; border-radius: 16px; }
.tools { height: 43px; padding-bottom: 1px; display: grid; grid-template-columns: 48px 52px 28px 50px 2px 54px 26px 52px 2px 54px 24px 48px 370px 45px 40px 30px 29px 14px; align-items: center; justify-items: center; }
.tools i { width: 1px; height: 18px; background: #e3e3e3; }
.tools span { font-size: 11px; letter-spacing: -.45px; color: #5f6368; }
.addtask { margin-left: 2px; }
.prev { transform: rotate(90deg); opacity: .45; }
.next { transform: rotate(-90deg); }
.kbd { justify-self: end; margin: 2px 1px 0 0; }
.scroll { display: flex; height: 766px; }
.thread { width: 990px; }
.bar { width: 10px; height: 706px; background: #c9c9c9; border-top: 1px solid #aaa; border-left: 1px solid #b8b8b8; }
.subject { height: 60px; display: flex; justify-content: space-between; align-items: center; padding-left: 65px; }
.subject h1 { margin: 0; font-size: 19.500px; font-weight: 400; letter-spacing: -.2px; color: #202124; }
.subject .acts { display: grid; grid-template-columns: 34px 32px 32px; justify-items: center; align-items: center; margin-right: 12px; }
.msg { display: flex; padding: 8px 0 0 15px; width: 971px; }
.first { height: 145px; border-bottom: 1px solid #eceff1; }
.msg + .msg { padding-top: 18px; height: 251px; }
.body { margin-left: 14px; width: 906px; }
.who { display: flex; align-items: center; height: 18px; }
.who b, .who small, .who time { padding-bottom: 2px; }
.who b { color: #202124; font-size: 13px; font-weight: 600; letter-spacing: -.24px; }
.who small { font-size: 10.700px; margin-left: 3px; letter-spacing: -.32px; color: #5f6368; }
.who time { margin-left: auto; font-size: 10.900px; letter-spacing: -.46px; color: #5f6368; }
.who time.recent { letter-spacing: -.37px; }
.who .acts { display: grid; grid-template-columns: 36px 36px 36px; justify-items: center; align-items: center; margin: 1px -9px 0 9px; }
.to { display: flex; align-items: center; height: 17px; font-size: 11px; gap: 5px; color: #5f6368; letter-spacing: -.28px; }
.sig { color: #fff; font-family: "Liberation Sans", Arial, sans-serif; font-size: 13px; }
.wide { margin-top: 8px; display: flex; align-items: flex-start; }
.wide > div, .narrow, .full { background: #131c64; }
.wide .s1 { width: 143px; height: 73px; padding-top: 6px; }
.wide .s2 { width: 286px; height: 47px; display: flex; flex-direction: column; align-items: center; gap: 5px; padding-top: 1px; color: #333; }
.s2 div { display: flex; align-items: center; height: 16px; }
.s2 b { color: #fff; font-size: 10.500px; letter-spacing: -.28px; }
.wide .s3 { width: 142px; height: 75px; padding: 21px 13px; font-size: 11px; display: flex; flex-direction: column; gap: 6px; line-height: 13px; letter-spacing: -.15px; }
.s3 b { letter-spacing: -.25px; }
.s3 u { color: #2f4ad0; }
.s1 { display: flex; padding-left: 18px; }
.photo { width: 45px; flex: none; overflow: hidden; color: #3d84be; font-size: 12.500px; line-height: 15px; }
.photo svg { margin-left: 2px; }
.person { margin-left: 5px; display: flex; flex-direction: column; font-size: 10px; line-height: 12px; gap: 7px; padding-top: 3px; letter-spacing: -.15px; }
.serif { font-family: "Liberation Serif", "Times New Roman", serif; }
.person.serif b { font-size: 11px; }
.narrow { margin-top: 10px; width: 112px; height: 144px; padding-top: 23px; overflow: hidden; }
.narrow .person { padding-top: 2px; }
.appt { display: flex; align-items: center; color: #3d84be; margin: 36px 0 0 20px; font-size: 12.600px; }
.pill { width: 22px; height: 9px; border-radius: 5px; background: #e8eaed; display: flex; align-items: center; justify-content: center; gap: 1px; }
.pill i { width: 3.500px; height: 3.500px; border-radius: 50%; background: #444; }
.replyrow { display: flex; padding-left: 15px; align-items: flex-start; }
.replyrow .avatar { margin-top: 15px; }
.card { margin: 8px 0 0 7px; width: 914px; height: 286px; border-radius: 16px; box-shadow: 0 1px 3px 1px rgba(60,64,67,.3); }
.rto { display: flex; align-items: center; height: 48px; padding: 0 16px; color: #444746; }
.rto span { font-size: 12.400px; margin-left: 12px; padding-bottom: 2px; letter-spacing: -.18px; }
.rto svg:nth-child(2) { margin-left: 5px; }
.rto .pop { margin-left: auto; }
.full { margin-left: 15px; width: 449px; height: 144px; display: flex; font-family: "Liberation Serif", serif; }
.f1 { width: 135px; padding: 24px 23px 0 14px; overflow: hidden; }
.id { display: flex; width: 98px; overflow: hidden; padding-left: 8px; height: 55px; margin-bottom: -1px; }
.id svg { margin-top: 1px; }
.id .person { margin-left: 9px; padding-top: 5px; gap: 8px; }
.noimg { font: bold 4.600px "Liberation Sans", sans-serif; fill: #7c7e90; }
.f2 { width: 203px; padding-top: 20px; text-align: center; font-size: 10.600px; }
.f2 svg { overflow: hidden; }
.f2 b { display: block; margin: 12px 0 0 -23px; }
.deco { font-family: "Lato", sans-serif; font-size: 62px; }
.thin { font-weight: 100; }
.heavy { font-weight: 900; }
.tag { font: 8px "Liberation Serif", serif; fill: #8589ab; }
.f3 { padding: 37px 0 0 12px; display: flex; flex-direction: column; font-size: 12.500px; line-height: 14px; }
.f3 span { letter-spacing: -.75px; }
.f3 b { font-size: 11px; font-weight: 400; margin: 5px 0 10px; -webkit-text-stroke: .3px #fff; letter-spacing: -.05px; }
.card > .pill { margin: 24px 0 4px 15px; height: 10px; }
.foot { height: 56px; border-top: 1px solid #d6d6d6; display: flex; align-items: center; padding: 0 17px 4px 15px; box-shadow: 0 -1px 1px rgba(0,0,0,.08); }
.sendbtn { display: flex; width: 95px; height: 33px; border-radius: 17px; overflow: hidden; background: #3150d2; color: #fff; font-weight: 600; font-size: 12.500px; letter-spacing: -.2px; line-height: 33px; }
.sendbtn span { width: 66px; text-align: center; border-right: 1px solid #142478; }
.sendbtn div { flex: 1; display: flex; align-items: center; justify-content: center; }
.fmt { display: grid; grid-template-columns: repeat(9, 28.800px); justify-items: center; align-items: center; margin: 0 0 1px 5.500px; }
.acolor { font-size: 13px; font-weight: 500; line-height: 12px; border-bottom: 2px solid #444746; width: 14px; text-align: center; height: 15px; }
.bin { margin-left: auto; margin-bottom: 1px; }
.rail { display: flex; flex-direction: column; align-items: center; padding: 74px 0 17px 1px; gap: 32px; }
.rail hr { width: 18px; border: 0; border-top: 1px solid #d9dce0; margin: 0; }
.rail .next { margin-top: auto; color: #111; }
.rail .add { color: #111; margin-top: 1px; }
.cal { font: bold 7px "Inter", sans-serif; fill: #3d70df; }

/* Desktop task bar */
.taskbar { height: 40px; background: linear-gradient(90deg, #352b26, #20211f 350px, #222930 600px, #20292f 950px, #242523); display: flex; color: #fff; }
.start { width: 48px; display: flex; align-items: center; justify-content: center; }
.wsearch { width: 288px; background: #333; border: 1px solid #595959; display: flex; align-items: center; padding-left: 11px; font-size: 14.500px; color: #d8d8d8; overflow: hidden; letter-spacing: -.28px; }
.wsearch span { margin-left: 11px; }
.scene { margin-left: auto; margin-top: 3px; }
.app { width: 49px; display: flex; align-items: center; justify-content: center; }
.view { width: 50px; padding-right: 1px; }
.run { background: linear-gradient(#a4f3cd, #a4f3cd) 50% 100% / 40px 2px no-repeat; }
.two { background: linear-gradient(90deg, #a4f3cd 31px, #76a790 31px) 50% 100% / 40px 2px no-repeat; }
.steam { background: linear-gradient(#ff7513, #ff7513) 0 100% / 48px 2px no-repeat #b66527; }
.active { background: linear-gradient(#a4f3cd, #a4f3cd) 0 100% / 100% 2px no-repeat #4c555b; }
.prof { position: relative; }
.prof span { position: absolute; left: 10px; top: 10px; width: 16px; height: 16px; border-radius: 50%; background: #0b8b9c; font-size: 9px; line-height: 16px; text-align: center; }
.wagrey { color: #838989; }
.tray { display: flex; align-items: center; margin-left: auto; padding-right: 4px; }
.cells { display: grid; grid-template-columns: repeat(6, 24px); align-items: center; justify-items: center; }
.cells path { fill: none; stroke: #fff; }
.cells path[fill] { fill: #fff; stroke: none; }
.temp { font-size: 14px; margin: 0 20px 0 7px; letter-spacing: -.5px; }
.when { display: flex; flex-direction: column; align-items: center; font-size: 12px; line-height: 18px; width: 54px; margin: 0 17px 0 5px; letter-spacing: -.45px; }
.notif { position: relative; margin-right: 19px; }
.peek { width: 1px; height: 40px; background: #626464; }
.lines { fill: none; stroke: #222; }
.notif span { position: absolute; left: 5px; top: 7px; width: 20px; height: 16px; border-radius: 8px; background: #444; border: 1px solid #888; font-size: 12px; line-height: 13px; text-align: center; }
```
